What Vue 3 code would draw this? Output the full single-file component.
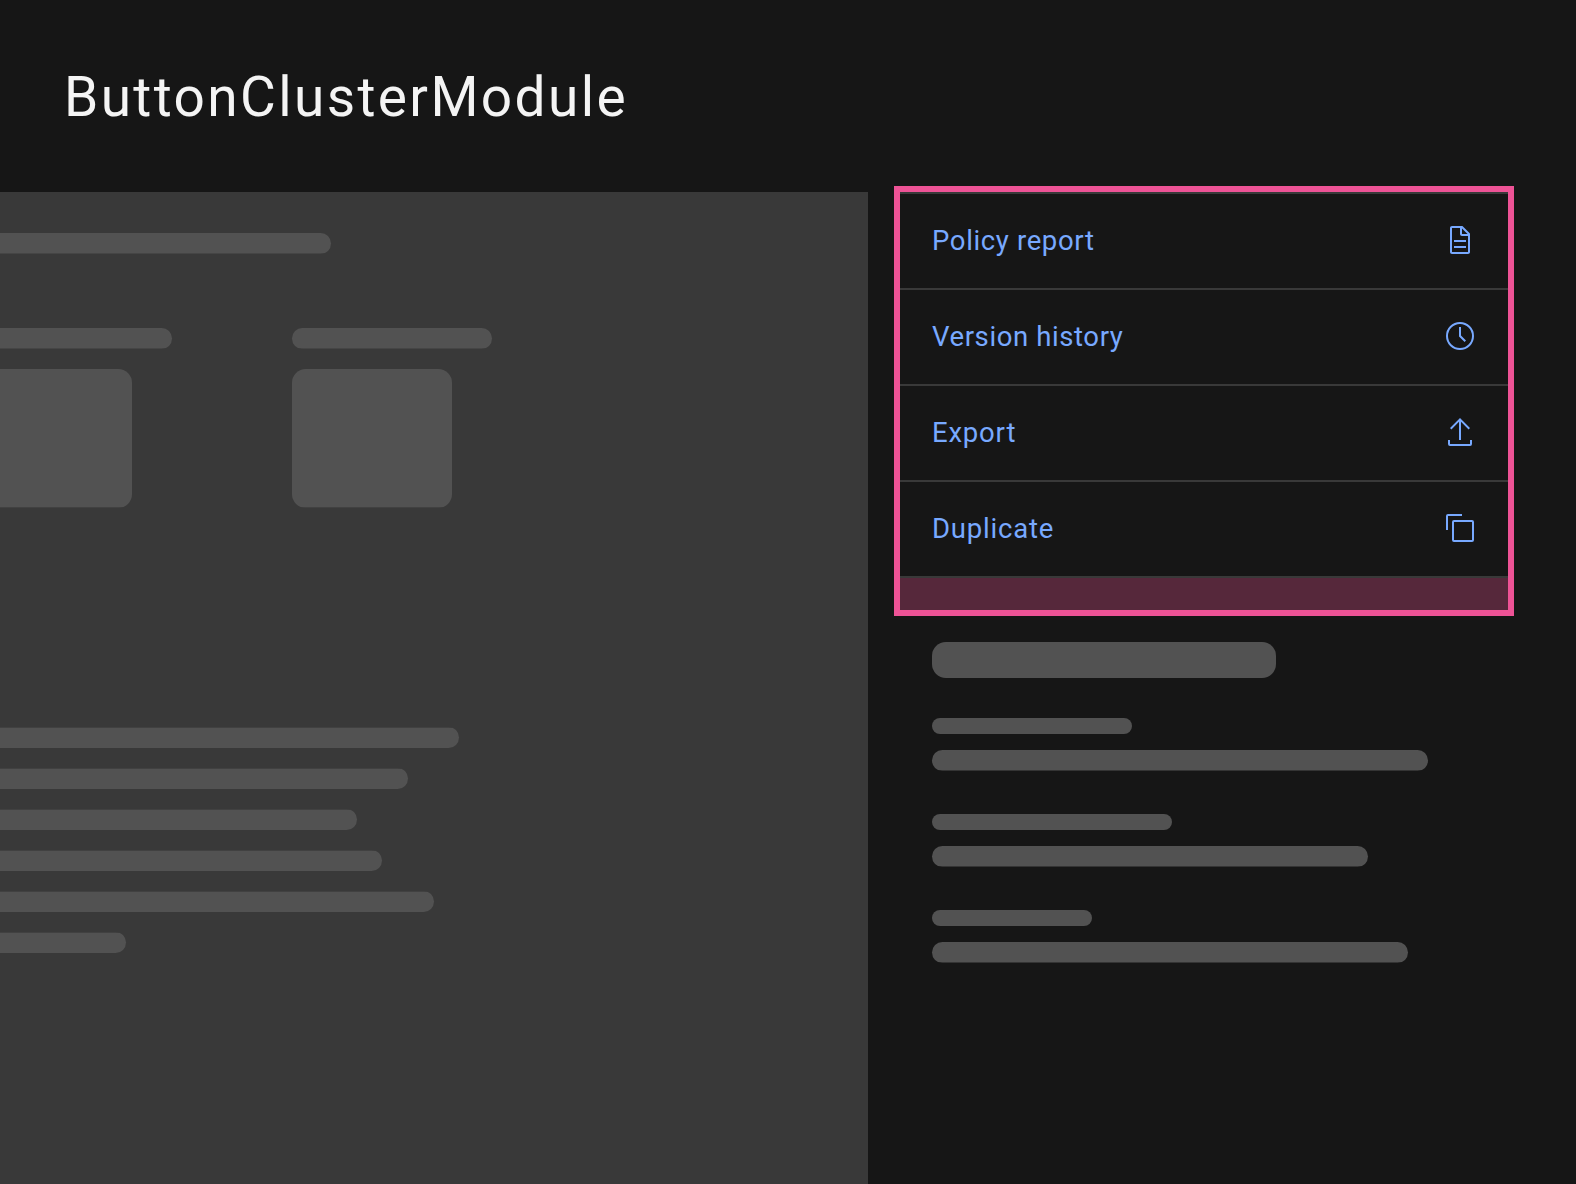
<script setup>
const lines = [459, 408, 357, 382, 434, 126]
const fields = [
  { label: 200, value: 496 },
  { label: 240, value: 436 },
  { label: 160, value: 476 },
]
const actions = [
  {
    name: 'Policy report',
    key: 'policy',
    paths: [
      'M25.7 9.3l-7-7C18.5 2.1 18.3 2 18 2H8C6.9 2 6 2.9 6 4v24c0 1.1.9 2 2 2h16c1.1 0 2-.9 2-2V10c0-.3-.1-.5-.3-.7zM18 4.4l5.6 5.6H18V4.4zM24 28H8V4h8v6c0 1.1.9 2 2 2h6v16z',
      'M10 22h12v2H10zM10 16h12v2H10z',
    ],
  },
  {
    name: 'Version history',
    key: 'version',
    paths: [
      'M16 30A14 14 0 1 1 30 16 14 14 0 0 1 16 30ZM16 4A12 12 0 1 0 28 16 12 12 0 0 0 16 4Z',
      'M20.59 22 15 16.41 15 7 17 7 17 15.58 22 20.59z',
    ],
  },
  {
    name: 'Export',
    key: 'export',
    paths: [
      'M6 12 7.41 13.41 15 5.83 15 24 17 24 17 5.83 24.59 13.41 26 12 16 2z',
      'M6 28V24H4v4a2 2 0 0 0 2 2H26a2 2 0 0 0 2-2V24H26v4Z',
    ],
  },
  {
    name: 'Duplicate',
    key: 'duplicate',
    paths: [
      'M28 10V28H10V10H28m0-2H10a2 2 0 0 0-2 2V28a2 2 0 0 0 2 2H28a2 2 0 0 0 2-2V10a2 2 0 0 0-2-2Z',
      'M4 18H2V4A2 2 0 0 1 4 2H18V4H4Z',
    ],
  },
]
</script>

<template>
  <div class="page">
    <header class="header">
      <h1 class="title">ButtonClusterModule</h1>
    </header>
    <div class="body">
      <main class="main">
        <div class="bar open heading"></div>
        <div class="tiles">
          <div class="tile first">
            <div class="bar open"></div>
            <div class="box open"></div>
          </div>
          <div class="tile">
            <div class="bar"></div>
            <div class="box"></div>
          </div>
        </div>
        <div class="lines">
          <div v-for="(w, i) in lines" :key="i" class="bar open line" :style="{ width: w + 'px' }"></div>
        </div>
      </main>
      <aside class="side">
        <nav class="cluster">
          <a v-for="a in actions" :key="a.key" class="action">
            <span class="label" :class="a.key">{{ a.name }}</span>
            <svg class="icon" viewBox="0 0 32 32"><path v-for="p in a.paths" :key="p" :d="p" /></svg>
          </a>
          <div class="spacer"></div>
        </nav>
        <div class="details">
          <div class="subhead"></div>
          <div v-for="(f, i) in fields" :key="i" class="field">
            <div class="small" :style="{ width: f.label + 'px' }"></div>
            <div class="bar value" :style="{ width: f.value + 'px' }"></div>
          </div>
        </div>
      </aside>
    </div>
  </div>
</template>

<style>
body {
  background: #161616;
}
</style>

<style scoped>
.page {
  width: 1576px;
  height: 1184px;
  overflow: hidden;
  display: flex;
  flex-direction: column;
  background: #161616;
  font-family: Roboto, "Liberation Sans", sans-serif;
}
.header {
  height: 192px;
  flex: none;
  display: flex;
  align-items: center;
  padding: 2px 64px 0;
  box-sizing: border-box;
}
.title {
  margin: 0;
  font-size: 55px;
  font-weight: 400;
  line-height: 64px;
  letter-spacing: 2.38px;
  color: #f4f4f4;
}
.body {
  flex: 1;
  display: flex;
}
.main {
  width: 868px;
  flex: none;
  background: #393939;
}
.bar {
  height: 21px;
  border-radius: 10.5px;
  background: linear-gradient(#525252 20px, #454545 20px);
}
.bar.open {
  border-top-left-radius: 0;
  border-bottom-left-radius: 0;
}
.heading {
  margin-top: 41px;
  width: 331px;
}
.tiles {
  margin-top: 74px;
  display: flex;
}
.tile {
  width: 200px;
}
.tile.first {
  width: 172px;
  margin-right: 120px;
}
.box {
  margin-top: 20px;
  width: 160px;
  height: 139px;
  border-radius: 14px;
  background: linear-gradient(#525252 138px, #414141 138px);
}
.first .box {
  width: 132px;
}
.box.open {
  border-radius: 0 14px 14px 0;
}
.lines {
  margin-top: 219px;
  display: flex;
  flex-direction: column;
  gap: 20px;
}
.bar.line {
  background: linear-gradient(#414141 1px, #525252 1px);
}
.side {
  flex: 1;
  padding-left: 26px;
}
.cluster {
  box-sizing: border-box;
  width: 620px;
  height: 430px;
  margin-top: -6px;
  border: 6px solid #ee5396;
  display: flex;
  flex-direction: column;
}
.action {
  box-sizing: border-box;
  height: 96px;
  border-top: 2px solid #393939;
  padding: 0 32px 2px;
  display: flex;
  align-items: center;
  justify-content: space-between;
  color: #78a9ff;
}
.label {
  padding-top: 2px;
  font-size: 27.5px;
  font-weight: 400;
  line-height: 36px;
  letter-spacing: 0.64px;
  white-space: nowrap;
}
.version {
  letter-spacing: 0.6px;
}
.export,
.duplicate {
  letter-spacing: 0.8px;
}
.icon {
  width: 32px;
  height: 32px;
  fill: #78a9ff;
}
.spacer {
  flex: 1;
  border-top: 2px solid #393939;
  background: #56283b;
}
.details {
  padding: 26px 0 0 38px;
}
.subhead {
  width: 344px;
  height: 36px;
  border-radius: 14px;
  background: #525252;
  margin-bottom: 40px;
}
.field {
  height: 96px;
}
.small {
  height: 16px;
  border-radius: 8px;
  background: #525252;
  margin-bottom: 16px;
}
.bar.value {
  background: linear-gradient(#525252 20px, #343434 20px);
}
</style>
